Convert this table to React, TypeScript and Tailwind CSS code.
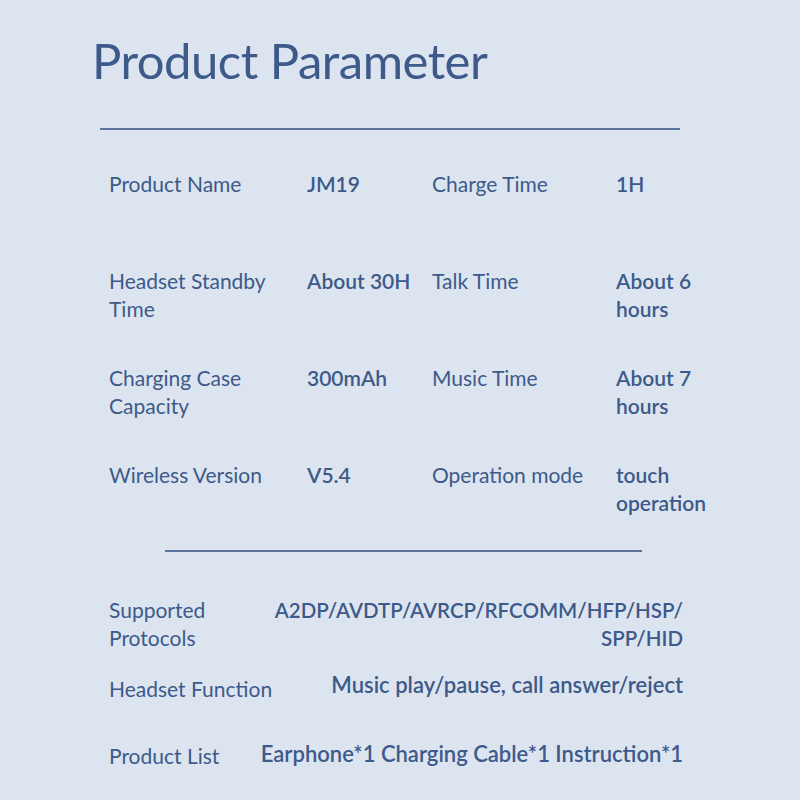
const specs = [
  { label: "Product Name", value: "JM19", label2: "Charge Time", value2: "1H" },
  { label: "Headset Standby Time", value: "About 30H", label2: "Talk Time", value2: "About 6 hours" },
  { label: "Charging Case Capacity", value: "300mAh", label2: "Music Time", value2: "About 7 hours" },
  { label: "Wireless Version", value: "V5.4", label2: "Operation mode", value2: "touch operation" },
];

export default function App() {
  return (
    <div className="w-[800px] h-[800px] bg-[#dce4f0] text-[#3d5a8a] overflow-hidden font-['Lato',sans-serif]">
      <h1 className="pl-[92px] pt-[30px] text-[49px] leading-[60px] tracking-[-0.5px]">Product Parameter</h1>

      <div className="ml-[100px] mt-[38px] w-[580px] h-[2px] bg-[#5a749e]" />

      <div className="ml-[109px] mt-[40px] grid grid-cols-[198px_125px_184px_104px] auto-rows-[97px] text-[21px] leading-[28px]">
        {specs.map((row) => (
          <div key={row.label} className="contents">
            <div className="pr-3">{row.label}</div>
            <div className="font-semibold">{row.value}</div>
            <div>{row.label2}</div>
            <div className="font-semibold">{row.value2}</div>
          </div>
        ))}
      </div>

      <div className="ml-[165px] -mt-[8px] w-[477px] h-[2px] bg-[#5a749e]" />

      <div className="ml-[109px] mr-[117px] mt-[44px] text-[21px] leading-[28px]">
        <div className="flex justify-between">
          <div className="w-[110px]">Supported Protocols</div>
          <div className="text-right font-semibold text-[20.5px]">
            A2DP/AVDTP/AVRCP/RFCOMM/HFP/HSP/
            <br />
            SPP/HID
          </div>
        </div>
        <div className="flex justify-between items-start mt-[19px]">
          <div className="pt-[4px]">Headset Function</div>
          <div className="font-semibold text-[22px]">Music play/pause, call answer/reject</div>
        </div>
        <div className="flex justify-between items-start mt-[37px]">
          <div className="pt-[2px]">Product List</div>
          <div className="font-semibold text-[22px]">Earphone*1 Charging Cable*1 Instruction*1</div>
        </div>
      </div>
    </div>
  );
}
